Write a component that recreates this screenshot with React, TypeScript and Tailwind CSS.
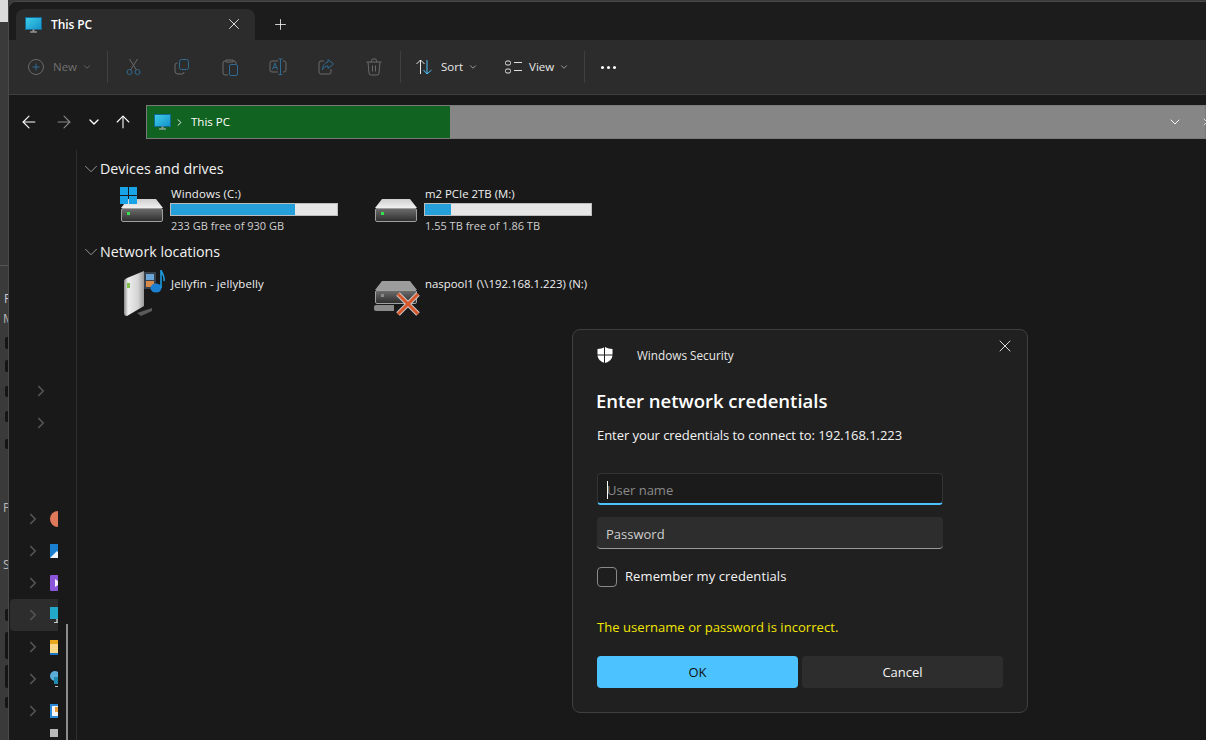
import { ChevronDown, ChevronRight, X, Plus, ArrowLeft, ArrowRight, ArrowUp } from "lucide-react";

const font = { fontFamily: '"Open Sans", "Noto Sans", sans-serif' };

// dark marks of the window behind, [gap above, height]
const stripMarks = [
  [8, 12],
  [11, 12],
  [14, 11],
  [14, 11],
  [17, 10],
];
const stripMarksLow = [
  [34, 12],
  [11, 27],
  [6, 23],
  [9, 11],
];

function PcIcon() {
  return (
    <svg width="17" height="16" viewBox="0 0 17 16">
      <defs>
        <linearGradient id="pcg" x1="0" y1="0" x2="1" y2="1">
          <stop offset="0" stopColor="#3fd0ea" />
          <stop offset="1" stopColor="#1490c8" />
        </linearGradient>
      </defs>
      <rect x="0.5" y="0.5" width="16" height="12" fill="url(#pcg)" stroke="#126a94" />
      <rect x="7.5" y="12.5" width="2" height="2" fill="#9a9a9a" />
      <rect x="5" y="14.5" width="7" height="1" fill="#c4c4c4" />
    </svg>
  );
}

function ToolIcon({ children }: { children: React.ReactNode }) {
  return (
    <div className="w-[48px] h-[32px] flex items-center justify-center">
      <svg width="18" height="18" viewBox="0 0 18 18" fill="none" strokeWidth="1">
        {children}
      </svg>
    </div>
  );
}

function Drive({ dim = false }: { dim?: boolean }) {
  return (
    <svg width="42" height="23" viewBox="0 0 42 23" className="block">
      <defs>
        <linearGradient id="dtop" x1="0" y1="0" x2="0" y2="1">
          <stop offset="0" stopColor="#cfcfcf" />
          <stop offset="1" stopColor="#f0f0f0" />
        </linearGradient>
        <linearGradient id="dfront" x1="0" y1="0" x2="0" y2="1">
          <stop offset="0" stopColor="#6e6e6e" />
          <stop offset="1" stopColor="#2c2c2c" />
        </linearGradient>
      </defs>
      <path d="M7 0H35L42 9H0Z" fill={dim ? "#9c9c9c" : "url(#dtop)"} />
      <rect x="0.5" y="9.5" width="41" height="13" rx="1.5" fill="url(#dfront)" stroke="#a0a0a0" />
      <rect x="6" y="13" width="3" height="3" fill={dim ? "#8a8a8a" : "#35e04a"} />
    </svg>
  );
}

function UsageBar({ fill }: { fill: string }) {
  return (
    <div className="w-[168px] h-[13px] bg-[#e6e6e6] border border-[#bcbcbc] mt-[3px]">
      <div className={`h-full bg-[#26a0da] ${fill}`} />
    </div>
  );
}

function Header({ label }: { label: string }) {
  return (
    <div className="flex items-center h-[22px] pl-[3px] text-[14.25px] text-[#f2f2f2]">
      <ChevronDown size={22} strokeWidth={1} className="text-[#a0a0a0] mr-[-2px]" />
      {label}
    </div>
  );
}

function NavRow({ children, selected = false }: { children: React.ReactNode; selected?: boolean }) {
  return (
    <div className={`h-[32px] ml-[1px] flex items-center pl-[14px] rounded-l-[4px] ${selected ? "bg-[#2d2d2d]" : ""}`}>
      <ChevronRight size={18} strokeWidth={2.2} className="text-[#555555] shrink-0" />
      <div className="ml-[8px] shrink-0">{children}</div>
    </div>
  );
}

export default function App() {
  return (
    <div className="relative w-[1206px] h-[740px] overflow-hidden bg-[#3a3a3a] flex" style={font}>
      {/* bit of the window behind */}
      <div className="w-[8px] shrink-0 flex flex-col text-[12px] text-[#b8b8b8] overflow-hidden">
        <div className="h-[22px] bg-[#dcdcdc] shrink-0" />
        <div className="h-[243px] shrink-0" />
        <div className="h-px bg-[#555555] shrink-0" />
        <div className="h-[23px] shrink-0" />
        <div className="pl-[4px] leading-[20px] text-[#c8ccd8] shrink-0">R</div>
        <div className="pl-[3px] leading-[20px] shrink-0">M</div>
        {stripMarks.map(([gap, h], i) => (
          <div key={i} className="ml-[5px] w-[3px] bg-[#151515] rounded-l-[2px] shrink-0" style={{ marginTop: gap, height: h }} />
        ))}
        <div className="h-[49px] shrink-0" />
        <div className="pl-[3px] leading-[20px] shrink-0">P</div>
        <div className="h-[37px] shrink-0" />
        <div className="pl-[3px] leading-[20px] shrink-0">S</div>
        {stripMarksLow.map(([gap, h], i) => (
          <div key={i} className="ml-[5px] w-[3px] bg-[#151515] rounded-l-[2px] shrink-0" style={{ marginTop: gap, height: h }} />
        ))}
      </div>

      {/* explorer window */}
      <div className="flex-1 mt-[1px] rounded-tl-[8px] border-l border-t border-[#4a4a4a] bg-[#191919] flex flex-col overflow-hidden">
        {/* tabs */}
        <div className="h-[38px] shrink-0 flex items-end pl-[7px] bg-[#1c1c1c]">
          <div className="w-[239px] h-[31px] bg-[#2c2c2c] rounded-t-[8px] flex items-center pl-[9px] pr-[12px]">
            <PcIcon />
            <span className="ml-[9px] text-[12px] text-white font-semibold flex-1 mt-[1px] tracking-[-0.1px]">This PC</span>
            <X size={18} strokeWidth={1.1} className="text-white mb-[1px]" />
          </div>
          <Plus size={17} strokeWidth={1.1} className="text-white ml-[17px] mb-[7px]" />
        </div>

        {/* toolbar */}
        <div className="h-[55px] shrink-0 bg-[#2c2c2c] border-b border-[#3e3e3e] flex items-center pl-[19px]">
          <svg width="16" height="16" viewBox="0 0 16 16" fill="none">
            <circle cx="8" cy="8" r="7.5" stroke="#6a6a6a" />
            <path d="M8 4.5V11.5M4.5 8H11.5" stroke="#2f6b92" />
          </svg>
          <span className="ml-[9px] text-[11.5px] text-[#707070]">New</span>
          <ChevronDown size={10} className="text-[#707070] ml-[5px]" />
          <div className="w-px h-[32px] bg-[#404040] ml-[15px]" />
          <div className="ml-[2px] flex">
            <ToolIcon>
              <g stroke="#2f6b92">
                <circle cx="4.5" cy="14" r="2.5" />
                <circle cx="12.5" cy="14" r="2.5" />
              </g>
              <path d="M5.5 12 12.5 1M11.5 12 4.5 1" stroke="#6a6a6a" />
            </ToolIcon>
            <ToolIcon>
              <rect x="6.5" y="1.5" width="9" height="10" rx="2" stroke="#2f6b92" />
              <path d="M4.5 5H4A2 2 0 0 0 2 7V13A3 3 0 0 0 5 16H9A2 2 0 0 0 11 14" stroke="#6a6a6a" />
            </ToolIcon>
            <ToolIcon>
              <path d="M5 3H4A2 2 0 0 0 2 5V15A2 2 0 0 0 4 17H7M12 3H13A2 2 0 0 1 15 5V6M5 2H12V4H5Z" stroke="#6a6a6a" />
              <rect x="8.5" y="6.5" width="8" height="11" rx="1.5" stroke="#2f6b92" />
            </ToolIcon>
            <ToolIcon>
              <path d="M9 3H3A2 2 0 0 0 1 5V12A2 2 0 0 0 3 14H9M14 3H15A2 2 0 0 1 17 5V12A2 2 0 0 1 15 14H14" stroke="#6a6a6a" />
              <path d="M9.5 1H13.5M11.5 1V16.5M9.5 16.5H13.5M3.5 11.5 6 5 8.5 11.5M4.3 9.5H7.7" stroke="#2f6b92" />
            </ToolIcon>
            <ToolIcon>
              <path d="M7 3H4A2 2 0 0 0 2 5V14A2 2 0 0 0 4 16H12A2 2 0 0 0 14 14V11" stroke="#6a6a6a" />
              <path d="M11 1.5 16.5 6 11 10.5V8C8 8 6.5 9.5 5.5 12 5.5 7.5 8 4.5 11 4Z" stroke="#2f6b92" />
            </ToolIcon>
            <ToolIcon>
              <path d="M1.5 4H16.5M6.5 4V2.5A1.5 1.5 0 0 1 8 1H10A1.5 1.5 0 0 1 11.5 2.5V4M3 4 4 15A2 2 0 0 0 6 17H12A2 2 0 0 0 14 15L15 4M7.5 7.5V13.5M10.5 7.5V13.5" stroke="#6a6a6a" />
            </ToolIcon>
          </div>
          <div className="w-px h-[32px] bg-[#404040] ml-[2px]" />
          <svg width="18" height="18" viewBox="0 0 18 18" fill="none" className="ml-[14px]">
            <path d="M5.5 16V2M1.5 6 5.5 2 9.5 6" stroke="#e8e8e8" />
            <path d="M12 2V16M8.5 12 12 16 16.5 12" stroke="#4cc2ff" />
          </svg>
          <span className="ml-[8px] text-[11.5px] text-[#e8e8e8]">Sort</span>
          <ChevronDown size={10} className="text-[#b0b0b0] ml-[5px]" />
          <svg width="18" height="14" viewBox="0 0 18 14" fill="none" className="ml-[27px]">
            <rect x="0.5" y="1" width="5" height="4" rx="1.5" stroke="#e0e0e0" />
            <rect x="0.5" y="9" width="5" height="4" rx="1.5" stroke="#e0e0e0" />
            <path d="M9 2.5H17M9 10.5H17" stroke="#e0e0e0" />
          </svg>
          <span className="ml-[6px] text-[11.5px] text-[#e8e8e8]">View</span>
          <ChevronDown size={10} className="text-[#b0b0b0] ml-[5px]" />
          <div className="w-px h-[32px] bg-[#404040] ml-[15px]" />
          <div className="ml-[16px] flex gap-[3px]">
            <div className="w-[3px] h-[3px] rounded-full bg-white" />
            <div className="w-[3px] h-[3px] rounded-full bg-white" />
            <div className="w-[3px] h-[3px] rounded-full bg-white" />
          </div>
        </div>

        {/* address row */}
        <div className="h-[55px] shrink-0 flex items-start pt-[10px]">
          <div className="w-[137px] h-[34px] shrink-0 flex items-center">
            <ArrowLeft size={20} strokeWidth={1.3} className="text-white ml-[10px]" />
            <ArrowRight size={20} strokeWidth={1.3} className="text-[#8a8a8a] ml-[15px]" />
            <ChevronDown size={16} strokeWidth={2} className="text-white ml-[12px]" />
            <ArrowUp size={20} strokeWidth={1.3} className="text-white ml-[11px]" />
          </div>
          <div className="flex-1 h-[34px] bg-[#868686] border border-[#7a7a7a] flex items-center">
            <div className="w-[303px] h-full bg-[#106320] flex items-center pl-[7px] text-[11.5px] text-white">
              <PcIcon />
              <ChevronRight size={11} strokeWidth={2} className="ml-[3px]" />
              <span className="ml-[6px]">This PC</span>
            </div>
            <div className="flex-1" />
            <ChevronDown size={16} strokeWidth={1.4} className="text-white mr-[18px]" />
            <X size={12} strokeWidth={1.4} className="text-white mr-[-8px]" />
          </div>
        </div>

        {/* body */}
        <div className="flex-1 flex min-h-0">
          {/* nav pane */}
          <div className="w-[49px] shrink-0 overflow-hidden">
            <div className="flex flex-col pt-[225px]">
              <div className="h-[32px] pl-[23px] flex items-center"><ChevronRight size={18} strokeWidth={2.2} className="text-[#555555]" /></div>
              <div className="h-[32px] pl-[23px] flex items-center"><ChevronRight size={18} strokeWidth={2.2} className="text-[#555555]" /></div>
              <div className="h-[64px]" />
              <NavRow><div className="w-[16px] h-[16px] rounded-full bg-[#e0785a]" /></NavRow>
              <NavRow>
                <svg width="14" height="14" viewBox="0 0 14 14" className="block">
                  <rect width="14" height="14" fill="#1b7fd0" />
                  <path d="M0 14 7 7 14 14Z" fill="#f0f4f8" />
                </svg>
              </NavRow>
              <NavRow>
                <svg width="14" height="16" viewBox="0 0 14 16" className="block">
                  <rect width="14" height="16" rx="1" fill="#8a55d8" />
                  <path d="M5 4 11 8 5 12Z" fill="#f4ecff" />
                </svg>
              </NavRow>
              <NavRow selected>
                <svg width="14" height="16" viewBox="0 0 14 16" className="block">
                  <rect width="14" height="12" fill="#22a8c8" />
                  <rect x="6" y="12" width="2" height="3" fill="#9a9a9a" />
                  <rect x="4" y="15" width="8" height="1" fill="#c4c4c4" />
                </svg>
              </NavRow>
              <NavRow>
                <svg width="14" height="15" viewBox="0 0 14 15" className="block">
                  <rect width="14" height="4" y="0" fill="#e8a820" />
                  <rect width="14" height="9" y="4" fill="#f8d88a" />
                  <rect width="14" height="2" y="13" fill="#1878c8" />
                </svg>
              </NavRow>
              <NavRow>
                <svg width="14" height="16" viewBox="0 0 14 16" className="block">
                  <circle cx="5" cy="5" r="5" fill="#5aaed8" />
                  <rect x="4" y="6" width="10" height="7" fill="#1f8ab0" />
                  <rect x="5" y="15" width="8" height="1" fill="#c4c4c4" />
                </svg>
              </NavRow>
              <NavRow>
                <svg width="14" height="14" viewBox="0 0 14 14" className="block">
                  <rect width="14" height="14" fill="#2a8ad8" />
                  <rect x="2" y="2" width="12" height="10" fill="#f4f4f4" />
                  <rect x="5" y="3" width="6" height="5" fill="#e8a040" />
                </svg>
              </NavRow>
              <div className="h-[32px] ml-[1px] pl-[40px] pt-[2px]">
                <div className="w-[10px] h-[8px] bg-[#b8b8b8]" />
              </div>
            </div>
          </div>
          {/* scroll track */}
          <div className="w-[19px] shrink-0 relative border-r border-[#2e2e2e]">
            <div className="absolute left-[8px] top-[474px] bottom-0 w-[2px] bg-[#8c8c8c]" />
          </div>

          {/* content */}
          <div className="flex-1 pt-[8px] text-[11.4px] text-[#f0f0f0]">
            <Header label="Devices and drives" />
            <div className="flex pl-[43px] h-[61px] pt-[4px]">
              <div className="w-[254px] flex">
                <div className="relative w-[50px] h-[40px] pl-[1px] pt-[15px] shrink-0">
                  <Drive />
                  <svg width="17" height="17" viewBox="0 0 17 17" className="absolute left-0 top-[3px]">
                    <path d="M0 0H8V8H0ZM9 0H17V8H9ZM0 9H8V17H0ZM9 9H17V17H9Z" fill="#19a4e8" />
                  </svg>
                </div>
                <div>
                  <div className="ml-[1px] h-[16px] leading-[20px] tracking-[0.15px]">Windows (C:)</div>
                  <UsageBar fill="w-[74.5%]" />
                  <div className="ml-[1px] mt-[2px] leading-[16px] text-[11px] text-[#cfcfcf]">233 GB free of 930 GB</div>
                </div>
              </div>
              <div className="flex">
                <div className="w-[50px] h-[40px] pl-[1px] pt-[15px] shrink-0"><Drive /></div>
                <div>
                  <div className="ml-[1px] h-[16px] leading-[20px]">m2 PCIe 2TB (M:)</div>
                  <UsageBar fill="w-[15.5%]" />
                  <div className="ml-[1px] mt-[2px] leading-[16px] text-[11px] text-[#cfcfcf]">1.55 TB free of 1.86 TB</div>
                </div>
              </div>
            </div>
            <Header label="Network locations" />
            <div className="flex pl-[43px] pt-[7px]">
              <div className="w-[254px] flex">
                <div className="w-[50px] shrink-0 pl-[4px]">
                  <svg width="42" height="48" viewBox="0 0 42 48">
                    <defs>
                      <linearGradient id="jf" x1="0" y1="0" x2="1" y2="0">
                        <stop offset="0" stopColor="#8a8a8a" />
                        <stop offset="0.2" stopColor="#eeeeee" />
                        <stop offset="0.7" stopColor="#d4d4d4" />
                        <stop offset="1" stopColor="#9a9a9a" />
                      </linearGradient>
                    </defs>
                    <path d="M3 8 20 1V36L3 46C1 46 0 45 0 43V11C0 10 1 9 3 8Z" fill="url(#jf)" />
                    <rect x="3" y="13" width="3" height="5" fill="#7fc04a" />
                    <path d="M13 43 28 38 28 41 17 46Z" fill="#5a5a5a" />
                    <rect x="20" y="2" width="12" height="17" fill="#39424c" />
                    <rect x="22" y="4" width="8" height="6" fill="#6aa6d8" />
                    <rect x="22" y="11" width="8" height="6" fill="#d88a4a" />
                    <ellipse cx="32" cy="18" rx="5.5" ry="4.5" fill="#1c7fd0" />
                    <path d="M37 18V0C38 4 41 6 40 11" stroke="#1c9be0" strokeWidth="1.6" fill="none" />
                  </svg>
                </div>
                <div className="ml-[1px] mt-[6px] h-[16px] leading-[16px] tracking-[0.15px]">Jellyfin - jellybelly</div>
              </div>
              <div className="flex">
                <div className="relative w-[50px] shrink-0 pl-[1px] pt-[11px]">
                  <Drive dim />
                  <div className="absolute left-0 top-[35px] w-[20px] h-[6px] bg-[#8a8a8a] rounded-l-[2px]" />
                  <svg width="26" height="26" viewBox="0 0 26 26" className="absolute left-[21px] top-[21px]">
                    <path d="M3 3 23 23M23 3 3 23" stroke="#c8c8c8" strokeWidth="5" />
                    <path d="M3 3 23 23M23 3 3 23" stroke="#d9552b" strokeWidth="3" />
                  </svg>
                </div>
                <div className="ml-[1px] mt-[6px] h-[16px] leading-[16px]">naspool1 (\\192.168.1.223) (N:)</div>
              </div>
            </div>
          </div>
        </div>
      </div>

      {/* credentials dialog */}
      <div className="absolute left-[572px] top-[329px] w-[456px] h-[384px] bg-[#202020] border border-[#3f3f3f] rounded-[8px] pl-[24px] pr-[24px] text-[13px] text-[#f4f4f4] flex flex-col">
        <X size={20} strokeWidth={1} className="absolute right-[12px] top-[6px] text-white" />
        <div className="flex items-center h-[50px]">
          <svg width="16" height="16" viewBox="0 0 16 16">
            <path d="M8 0C10 1.3 13 2 15.5 2V8C15.5 12 12 15 8 16 4 15 .5 12 .5 8V2C3 2 6 1.3 8 0Z" fill="#ffffff" />
            <path d="M7.5 0V16M0 8H16" stroke="#202020" strokeWidth="1" />
          </svg>
          <span className="ml-[24px] text-[11.75px] text-[#e8e8e8] mt-[1px]">Windows Security</span>
        </div>
        <div className="text-[18.5px] font-semibold text-white mt-[5px] leading-[32px] -ml-px">Enter network credentials</div>
        <div className="mt-[8px] leading-[20px] tracking-[-0.06px]">Enter your credentials to connect to: 192.168.1.223</div>
        <div className="mt-[28px] w-[346px] h-[32px] bg-[#1b1b1b] border border-[#333333] border-b-2 border-b-[#4cc2ff] rounded-[4px] flex items-center pl-[9px] text-[#8a8a8a] pt-[4px]">
          <span className="w-px h-[18px] bg-white mr-[-1px] mb-[2px]" />User name
        </div>
        <div className="mt-[12px] w-[346px] h-[32px] bg-[#2d2d2d] border-b border-b-[#9a9a9a] rounded-[4px] flex items-center pl-[9px] text-[#cfcfcf] pt-[4px]">
          Password
        </div>
        <div className="mt-[18px] flex items-center h-[20px]">
          <div className="w-[20px] h-[20px] rounded-[4px] border border-[#8a8a8a] bg-[#1e1e1e]" />
          <span className="ml-[8px] tracking-[0.1px]">Remember my credentials</span>
        </div>
        <div className="mt-[30px] h-[20px] leading-[20px] text-[#f2e600] tracking-[0.05px]">The username or password is incorrect.</div>
        <div className="mt-[19px] flex gap-[4px]">
          <div className="w-[201px] h-[32px] rounded-[4px] bg-[#4cc2ff] text-[#101010] flex items-center justify-center pt-[2px]">OK</div>
          <div className="w-[201px] h-[32px] rounded-[4px] bg-[#2d2d2d] flex items-center justify-center pt-[2px]">Cancel</div>
        </div>
      </div>
    </div>
  );
}
